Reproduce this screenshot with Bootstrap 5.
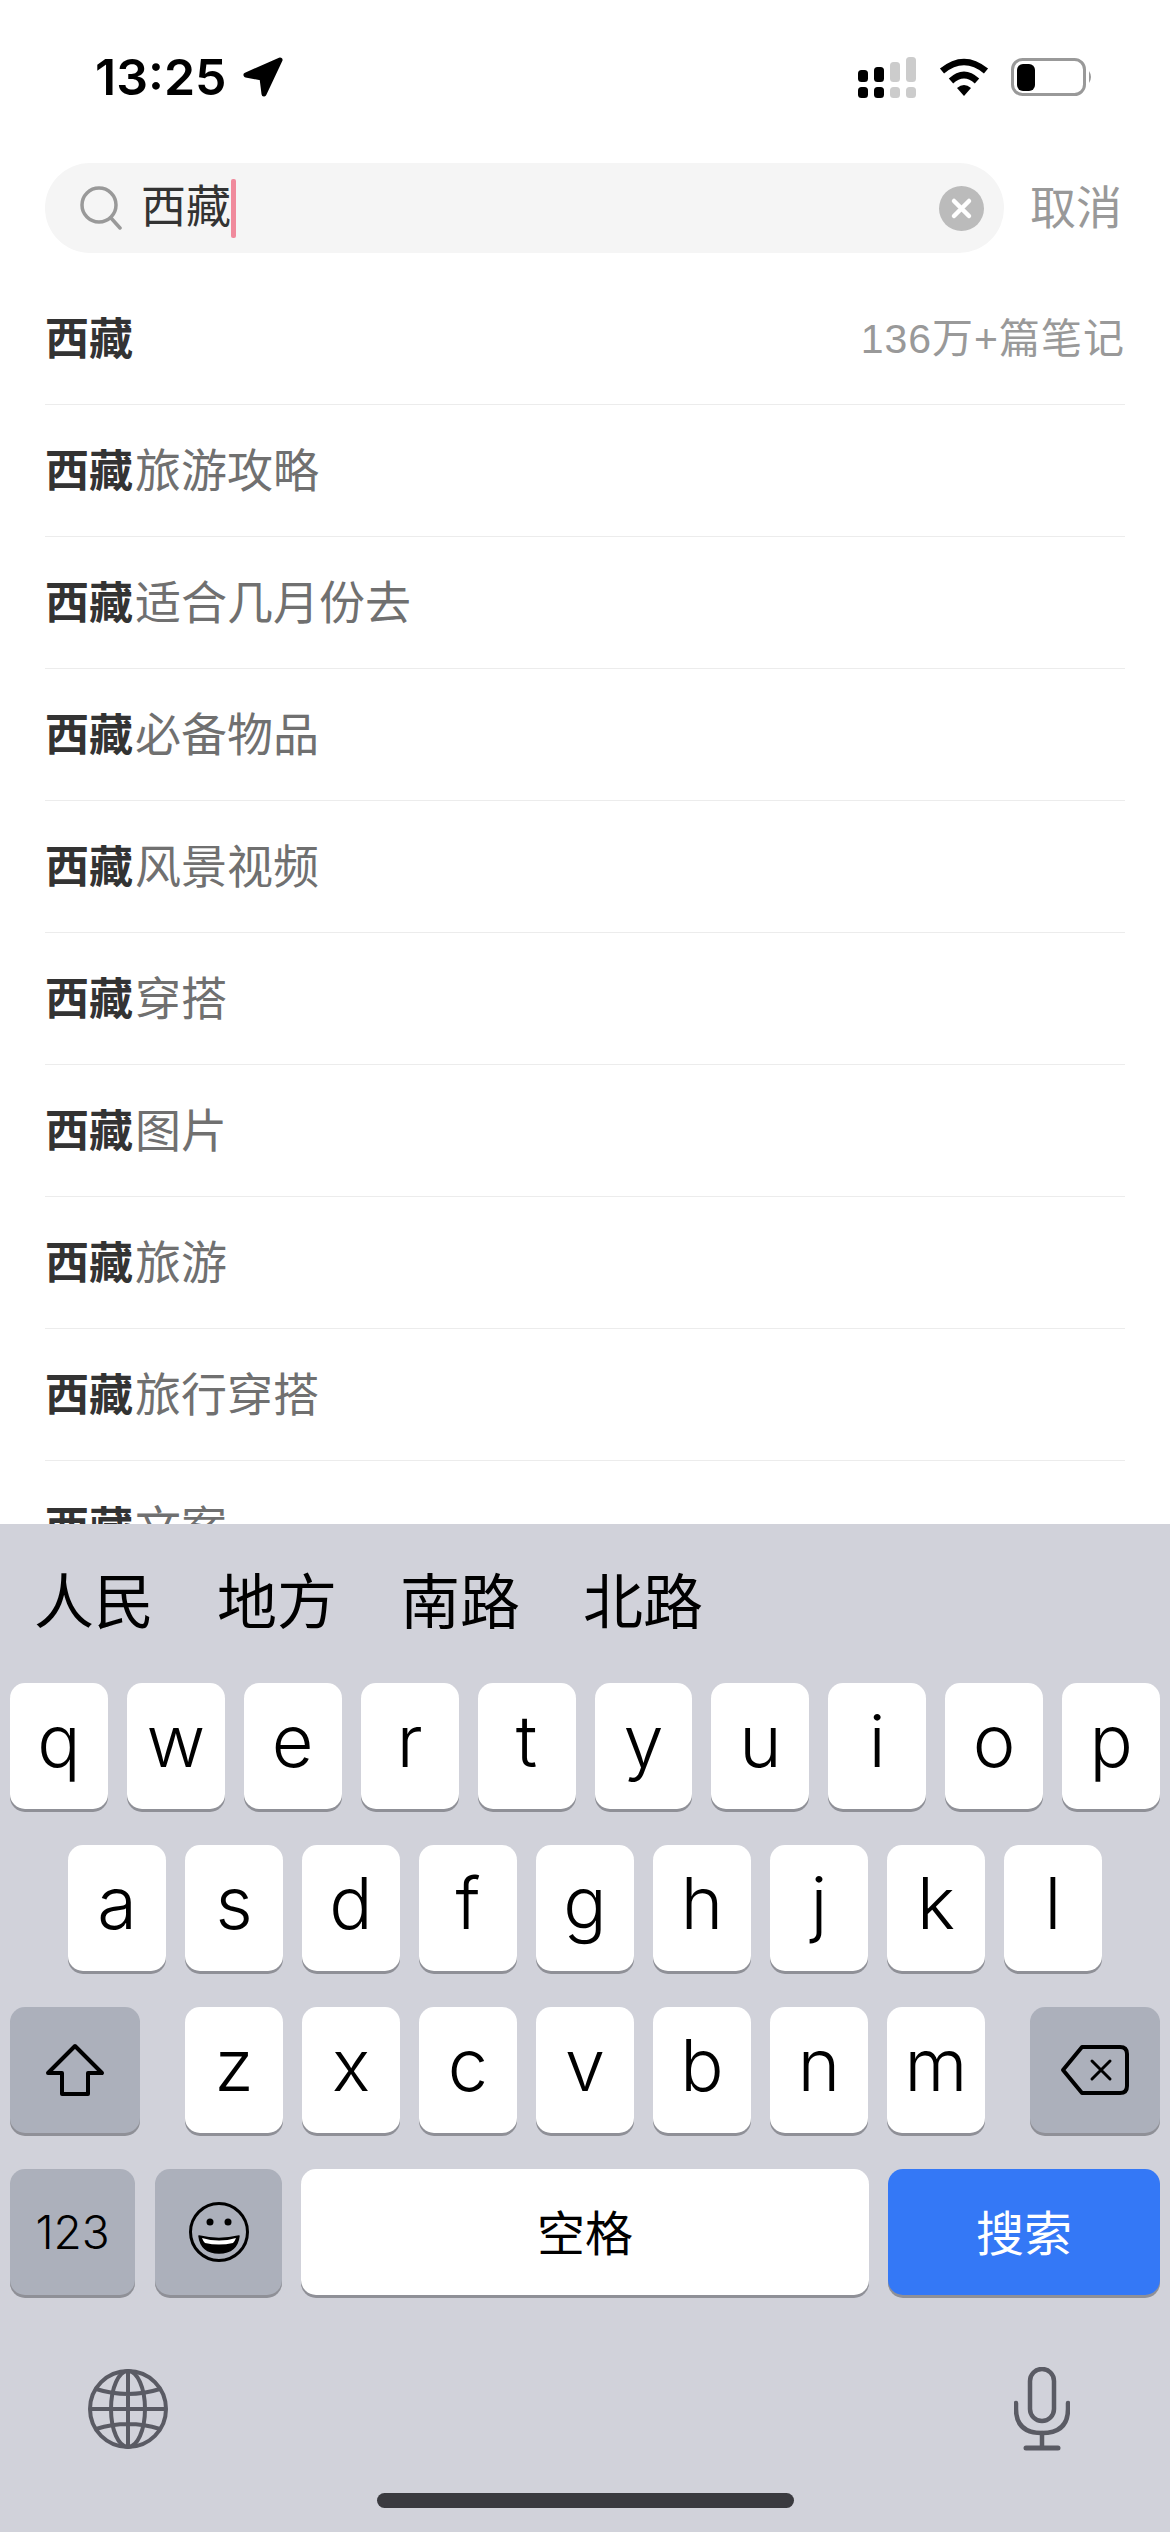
<!DOCTYPE html>
<html lang="zh-CN">
<head>
    <meta charset="UTF-8">
    <meta name="viewport" content="width=device-width, initial-scale=1.0">
    <title>搜索</title>
    <link href="https://cdn.jsdelivr.net/npm/bootstrap@5.3.0/dist/css/bootstrap.min.css" rel="stylesheet">
    <style>
        body { font-family: "Liberation Sans", "Noto Sans CJK SC", sans-serif; background: #fff; }
        .phone { width: 1170px; height: 2532px; overflow: hidden; }
        .status-row { height: 154px; padding: 0 77px 0 95px; }
        .clock { font-family: Inter, sans-serif; font-weight: 600; font-size: 50px; line-height: 1; color: #000; }
        .search-row { height: 90px; margin-top: 9px; padding: 0 48px 0 45px; gap: 26px; }
        .search-box { height: 90px; background: #f5f5f5; padding: 0 20px 0 35px; }
        .search-text { font-size: 45px; line-height: 60px; color: #333; margin-left: 19px; }
        .caret-bar { width: 5px; height: 59px; background: #f08a9c; border-radius: 2px; }
        .cancel-link { font-size: 46px; color: #999; line-height: 1; }
        .suggest-wrap { margin-top: 20px; padding: 0 45px; min-height: 0; }
        .suggest-item { height: 132px; padding: 2px 0 0; font-size: 46px; color: #707070; border-color: #ececec; background: transparent; }
        .suggest-item b { font-size: 44px; font-weight: 700; color: #333; margin-right: 2px; }
        .note-count { font-size: 41px; color: #999; letter-spacing: 1px; }
        .kbd-panel { height: 1008px; background: #d1d2da; }
        .cand-row { height: 159px; padding: 0 0 0 34px; gap: 63px; font-size: 60px; color: #000; }
        .kbd-row { height: 126px; margin-bottom: 36px; padding: 0 10px; }
        .key-btn { height: 126px; background: #fff; border-radius: 15px; box-shadow: 0 3px 0 #8f9097; color: #000; }
        .key-letter { width: 98px; font-family: Inter, sans-serif; font-weight: 300; font-size: 72px; line-height: 1; padding-bottom: 10px; }
        .key-dark { background: #acb0bb; }
        .key-shift { width: 130px; }
        .key-num { width: 125px; font-family: Inter, sans-serif; font-weight: 300; font-size: 46px; }
        .key-emoji { width: 127px; margin-left: 20px; }
        .key-space { width: 568px; margin-left: 19px; font-size: 48px; padding-top: 6px; }
        .key-search { width: 272px; margin-left: 19px; background: #3478f6; color: #fff; font-size: 48px; padding-top: 6px; }
        .letters-gap { gap: 19px; }
        .kbd-bottom { padding: 0 100px 0 88px; height: 84px; margin-top: 72px; }
        .home-bar { width: 417px; height: 15px; background: #3a3a3f; border-radius: 8px; margin: 42px auto 0; }
    </style>
</head>
<body>
    <div class="phone d-flex flex-column">
        <div class="status-row d-flex align-items-center justify-content-between flex-shrink-0">
            <div class="d-flex align-items-center gap-3">
                <span class="clock">13:25</span>
                <svg width="40" height="40" viewBox="0 0 40 40"><path d="M37 3 L3 18 L19 21 L21 37 Z" fill="#000" stroke="#000" stroke-width="5" stroke-linejoin="round"/></svg>
            </div>
            <svg width="235" height="42" viewBox="0 0 235 42">
                <rect x="0" y="14" width="10" height="12" rx="3.5" fill="#000"/>
                <rect x="16" y="11" width="10" height="15" rx="3.5" fill="#000"/>
                <rect x="32" y="6" width="10" height="20" rx="3.5" fill="#ccc"/>
                <rect x="48" y="1" width="10" height="25" rx="3.5" fill="#ccc"/>
                <rect x="0" y="31" width="10" height="11" rx="3.5" fill="#000"/>
                <rect x="16" y="31" width="10" height="11" rx="3.5" fill="#000"/>
                <rect x="32" y="31" width="10" height="11" rx="3.5" fill="#ccc"/>
                <rect x="48" y="31" width="10" height="11" rx="3.5" fill="#ccc"/>
                <path d="M84 15 Q106 -3 128 15" fill="none" stroke="#000" stroke-width="6.5"/>
                <path d="M93 25 Q106 13 119 25" fill="none" stroke="#000" stroke-width="6.5"/>
                <path d="M99 32 Q106 26 113 32 L106 40 Z" fill="#000"/>
                <rect x="154.500" y="3.500" width="72" height="35" rx="10" fill="none" stroke="#999" stroke-width="3"/>
                <rect x="159" y="8" width="18" height="27" rx="6" fill="#000"/>
                <path d="M231 15 Q235 21 231 27 Z" fill="#999"/>
            </svg>
        </div>

        <div class="search-row d-flex align-items-center flex-shrink-0">
            <div class="search-box rounded-pill d-flex align-items-center flex-grow-1">
                <svg width="42" height="44" viewBox="0 0 42 44" fill="none" stroke="#999" stroke-width="3.500" stroke-linecap="round"><circle cx="19" cy="19" r="17"/><path d="M31 32 L40 42"/></svg>
                <span class="search-text">西藏</span>
                <span class="caret-bar"></span>
                <svg class="ms-auto" width="45" height="45" viewBox="0 0 45 45"><circle cx="22.500" cy="22.500" r="22.500" fill="#bbb"/><path d="M15 15 L30 30 M30 15 L15 30" stroke="#fff" stroke-width="4.500" stroke-linecap="round"/></svg>
            </div>
            <span class="cancel-link">取消</span>
        </div>

        <div class="suggest-wrap flex-grow-1 overflow-hidden">
            <div class="list-group list-group-flush">
                <div class="list-group-item suggest-item d-flex align-items-center justify-content-between"><b>西藏</b><span class="note-count">136万+篇笔记</span></div>
                <div class="list-group-item suggest-item d-flex align-items-center"><span><b>西藏</b>旅游攻略</span></div>
                <div class="list-group-item suggest-item d-flex align-items-center"><span><b>西藏</b>适合几月份去</span></div>
                <div class="list-group-item suggest-item d-flex align-items-center"><span><b>西藏</b>必备物品</span></div>
                <div class="list-group-item suggest-item d-flex align-items-center"><span><b>西藏</b>风景视频</span></div>
                <div class="list-group-item suggest-item d-flex align-items-center"><span><b>西藏</b>穿搭</span></div>
                <div class="list-group-item suggest-item d-flex align-items-center"><span><b>西藏</b>图片</span></div>
                <div class="list-group-item suggest-item d-flex align-items-center"><span><b>西藏</b>旅游</span></div>
                <div class="list-group-item suggest-item d-flex align-items-center"><span><b>西藏</b>旅行穿搭</span></div>
                <div class="list-group-item suggest-item d-flex align-items-center"><span><b>西藏</b>文案</span></div>
            </div>
        </div>

        <div class="kbd-panel flex-shrink-0">
            <div class="cand-row d-flex align-items-center"><span>人民</span><span>地方</span><span>南路</span><span>北路</span></div>

            <div class="kbd-row d-flex justify-content-center letters-gap">
                <div class="key-btn key-letter d-flex align-items-center justify-content-center">q</div>
                <div class="key-btn key-letter d-flex align-items-center justify-content-center">w</div>
                <div class="key-btn key-letter d-flex align-items-center justify-content-center">e</div>
                <div class="key-btn key-letter d-flex align-items-center justify-content-center">r</div>
                <div class="key-btn key-letter d-flex align-items-center justify-content-center">t</div>
                <div class="key-btn key-letter d-flex align-items-center justify-content-center">y</div>
                <div class="key-btn key-letter d-flex align-items-center justify-content-center">u</div>
                <div class="key-btn key-letter d-flex align-items-center justify-content-center">i</div>
                <div class="key-btn key-letter d-flex align-items-center justify-content-center">o</div>
                <div class="key-btn key-letter d-flex align-items-center justify-content-center">p</div>
            </div>
            <div class="kbd-row d-flex justify-content-center letters-gap">
                <div class="key-btn key-letter d-flex align-items-center justify-content-center">a</div>
                <div class="key-btn key-letter d-flex align-items-center justify-content-center">s</div>
                <div class="key-btn key-letter d-flex align-items-center justify-content-center">d</div>
                <div class="key-btn key-letter d-flex align-items-center justify-content-center">f</div>
                <div class="key-btn key-letter d-flex align-items-center justify-content-center">g</div>
                <div class="key-btn key-letter d-flex align-items-center justify-content-center">h</div>
                <div class="key-btn key-letter d-flex align-items-center justify-content-center">j</div>
                <div class="key-btn key-letter d-flex align-items-center justify-content-center">k</div>
                <div class="key-btn key-letter d-flex align-items-center justify-content-center">l</div>
            </div>
            <div class="kbd-row d-flex justify-content-between">
                <div class="key-btn key-dark key-shift d-flex align-items-center justify-content-center">
                    <svg width="60" height="54" viewBox="0 0 60 54" fill="none" stroke="#000" stroke-width="4" stroke-linejoin="round"><path d="M30 3 L57 30 L43 30 L43 51 L17 51 L17 30 L3 30 Z"/></svg>
                </div>
                <div class="d-flex letters-gap">
                    <div class="key-btn key-letter d-flex align-items-center justify-content-center">z</div>
                    <div class="key-btn key-letter d-flex align-items-center justify-content-center">x</div>
                    <div class="key-btn key-letter d-flex align-items-center justify-content-center">c</div>
                    <div class="key-btn key-letter d-flex align-items-center justify-content-center">v</div>
                    <div class="key-btn key-letter d-flex align-items-center justify-content-center">b</div>
                    <div class="key-btn key-letter d-flex align-items-center justify-content-center">n</div>
                    <div class="key-btn key-letter d-flex align-items-center justify-content-center">m</div>
                </div>
                <div class="key-btn key-dark key-shift d-flex align-items-center justify-content-center">
                    <svg width="70" height="52" viewBox="0 0 70 52" fill="none" stroke="#000" stroke-linejoin="round"><path d="M22 3 L60 3 Q67 3 67 10 L67 42 Q67 49 60 49 L22 49 L3 26 Z" stroke-width="4"/><path d="M32 17 L50 35 M50 17 L32 35" stroke-width="3" stroke-linecap="round"/></svg>
                </div>
            </div>
            <div class="kbd-row d-flex">
                <div class="key-btn key-dark key-num d-flex align-items-center justify-content-center">123</div>
                <div class="key-btn key-dark key-emoji d-flex align-items-center justify-content-center">
                    <svg width="60" height="60" viewBox="0 0 60 60"><circle cx="30" cy="30" r="28.500" fill="none" stroke="#000" stroke-width="3"/><circle cx="21" cy="20" r="3.500" fill="#000"/><circle cx="39" cy="20" r="3.500" fill="#000"/><path d="M10 34 Q30 39 50 34 Q48 51 30 51 Q12 51 10 34 Z" fill="#000" stroke="#000" stroke-width="1.500" stroke-linejoin="round"/><path d="M13 36 Q30 41 47 36 Q46 39 44 41 Q30 44 16 41 Q14 39 13 36 Z" fill="#fff"/></svg>
                </div>
                <div class="key-btn key-space d-flex align-items-center justify-content-center">空格</div>
                <div class="key-btn key-search d-flex align-items-center justify-content-center">搜索</div>
            </div>

            <div class="kbd-bottom d-flex align-items-center justify-content-between">
                <svg width="80" height="80" viewBox="0 0 80 80" fill="none" stroke="#5a5b64" stroke-width="4"><circle cx="40" cy="40" r="38"/><ellipse cx="40" cy="40" rx="17" ry="38"/><path d="M40 2 V78 M2 40 H78 M8 20 Q40 30 72 20 M8 60 Q40 50 72 60"/></svg>
                <svg width="56" height="84" viewBox="0 0 56 84" fill="none" stroke="#5a5b64" stroke-width="4.500" stroke-linecap="round"><rect x="16" y="2" width="24" height="52" rx="12"/><path d="M2 36 V42 Q2 66 28 66 Q54 66 54 42 V36"/><path d="M28 66 V80"/><path d="M12 81 H44" stroke-width="5"/></svg>
            </div>
            <div class="home-bar"></div>
        </div>
    </div>
    <script src="https://cdn.jsdelivr.net/npm/bootstrap@5.3.0/dist/js/bootstrap.bundle.min.js"></script>
</body>
</html>
